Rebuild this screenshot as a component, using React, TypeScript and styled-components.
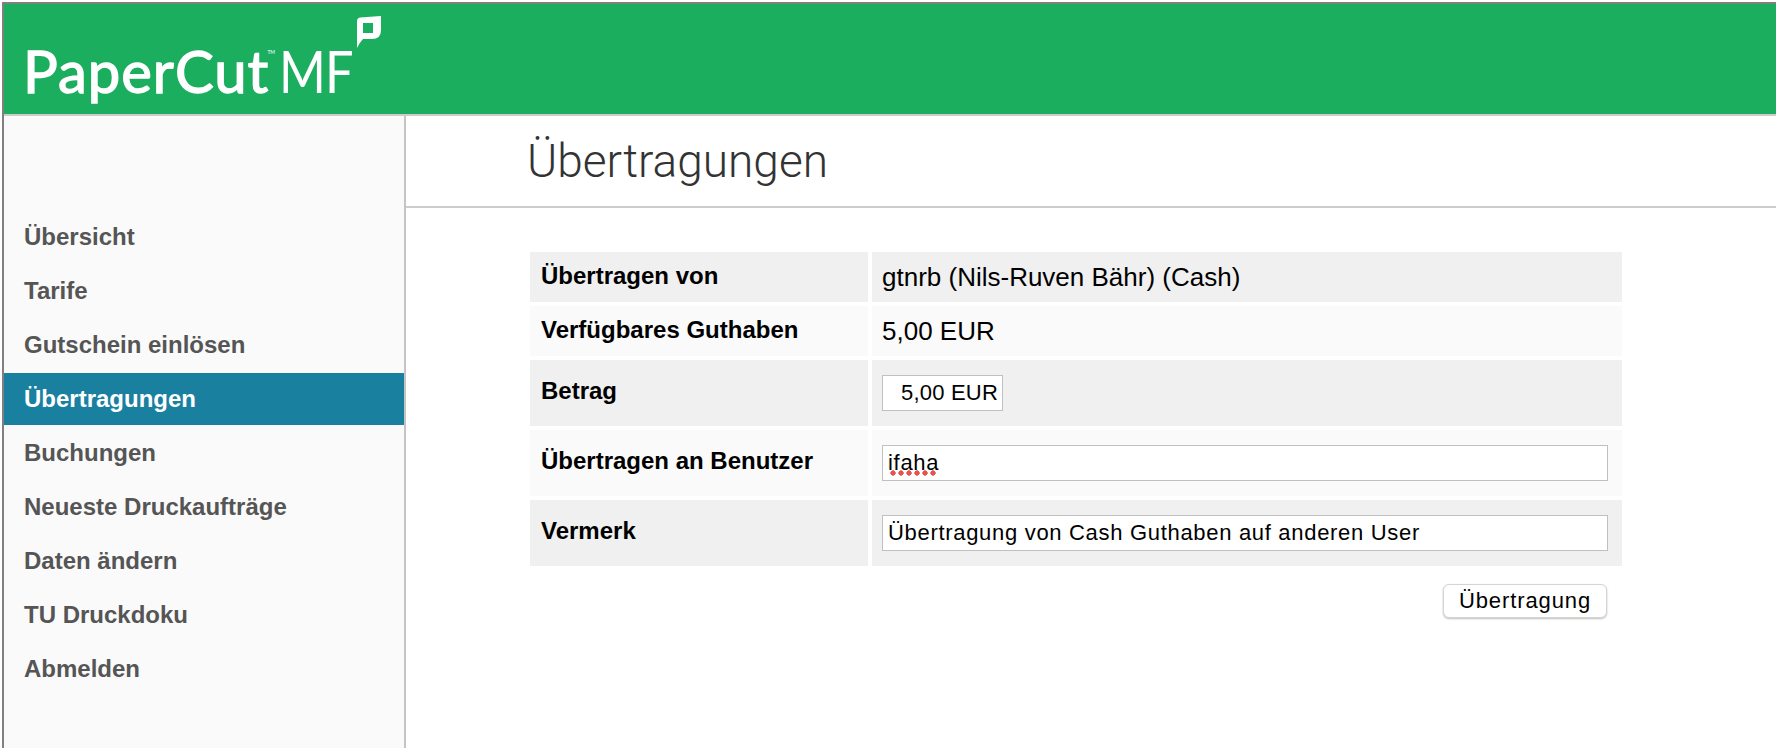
import { createGlobalStyle } from "styled-components";
import styled from "styled-components";

const GlobalStyle = createGlobalStyle`
  html, body {
    margin: 0;
    padding: 0;
    height: 100%;
    background: #ffffff;
    overflow: hidden;
  }
  #root {
    height: 100%;
  }
`;

const Frame = styled.div`
  box-sizing: border-box;
  height: 746px;
  margin: 2px 0 0 2px;
  border-top: 2px solid #808080;
  border-left: 2px solid #808080;
  display: flex;
  flex-direction: column;
  font-family: "Liberation Sans", Arial, sans-serif;
`;

const Header = styled.header`
  flex: none;
  box-sizing: border-box;
  height: 112px;
  background: #1cae5f;
  border-bottom: 2px solid #cccccc;
  padding: 32px 0 0 19px;
`;

const Logo = styled.div`
  position: relative;
  display: flex;
  align-items: baseline;
  color: #ffffff;
  font-family: Lato, "Open Sans", sans-serif;
  font-size: 58px;
  line-height: 70px;
  white-space: nowrap;
`;

const LogoStrong = styled.span`
  font-weight: 400;
  letter-spacing: 1px;
  -webkit-text-stroke: 1.3px #ffffff;
`;

const LogoTm = styled.span`
  font-size: 5px;
  line-height: 5px;
  align-self: flex-start;
  margin: 14px 0 0 -2px;
`;

const LogoLight = styled.span`
  font-weight: 400;
  margin-left: 4px;
  letter-spacing: -1px;
  transform: scaleX(0.87);
  transform-origin: left center;
`;

const LogoBubble = styled.svg`
  position: absolute;
  left: 334px;
  top: -20px;
`;

const Body = styled.div`
  flex: 1;
  display: flex;
  min-height: 0;
`;

const Sidebar = styled.nav`
  flex: none;
  box-sizing: border-box;
  width: 402px;
  background: #fafafa;
  border-right: 2px solid #c4c4c4;
  padding-top: 95px;
  display: flex;
  flex-direction: column;
  gap: 2px;
`;

const NavItem = styled.a<{ $active?: boolean }>`
  display: flex;
  align-items: center;
  height: 52px;
  padding-left: 20px;
  font-size: 24px;
  font-weight: 700;
  color: ${(p) => (p.$active ? "#ffffff" : "#555555")};
  background: ${(p) => (p.$active ? "#1a80a0" : "transparent")};
`;

const Main = styled.main`
  flex: 1;
  min-width: 0;
`;

const TitleBar = styled.div`
  box-sizing: border-box;
  height: 92px;
  border-bottom: 2px solid #cccccc;
  padding-left: 121px;
`;

const Title = styled.h1`
  margin: 0;
  font-family: Roboto, "Liberation Sans", sans-serif;
  font-weight: 300;
  font-size: 46px;
  line-height: 90px;
  color: #333333;
`;

const Content = styled.div`
  padding: 44px 154px 0 124px;
`;

const FormGrid = styled.div`
  display: grid;
  grid-template-columns: 338px 1fr;
  gap: 4px;
`;

const LabelCell = styled.div<{ $alt?: boolean; $tall?: boolean }>`
  box-sizing: border-box;
  height: ${(p) => (p.$tall ? 66 : 50)}px;
  padding: ${(p) => (p.$tall ? 18 : 11)}px 0 0 11px;
  background: ${(p) => (p.$alt ? "#fafafa" : "#f0f0f0")};
  font-size: 24px;
  line-height: 26px;
  font-weight: 700;
  color: #000000;
`;

const ValueCell = styled.div<{ $alt?: boolean; $tall?: boolean }>`
  position: relative;
  box-sizing: border-box;
  height: ${(p) => (p.$tall ? 66 : 50)}px;
  padding: ${(p) => (p.$tall ? "15px 14px 0 10px" : "11px 0 0 10px")};
  background: ${(p) => (p.$alt ? "#fafafa" : "#f0f0f0")};
  font-size: 26px;
  line-height: 28px;
  color: #000000;
`;

const TextInput = styled.input<{ $short?: boolean }>`
  display: block;
  box-sizing: border-box;
  width: ${(p) => (p.$short ? "121px" : "100%")};
  height: 36px;
  margin: 0;
  padding: ${(p) => (p.$short ? "0 4px 0 0" : "0 0 0 5px")};
  border: 1px solid #c0c0c0;
  border-radius: 0;
  outline: none;
  background: #ffffff;
  color: #000000;
  font-family: "Liberation Sans", Arial, sans-serif;
  font-size: 22px;
  letter-spacing: ${(p) => (p.$short ? "0.2px" : "0.69px")};
  text-align: ${(p) => (p.$short ? "right" : "left")};
`;

const SpellMark = styled.span`
  position: absolute;
  left: 17px;
  top: 40px;
  width: 47px;
  height: 6px;
  background-image: radial-gradient(circle at 4px 3px, #e8524a 2.4px, transparent 2.9px);
  background-size: 8px 6px;
  background-repeat: repeat-x;
`;

const Actions = styled.div`
  display: flex;
  justify-content: flex-end;
  padding: 18px 15px 0 0;
`;

const Button = styled.button`
  box-sizing: border-box;
  width: 164px;
  height: 34px;
  padding: 0;
  border: 1px solid #d4d4d4;
  border-radius: 6px;
  background: #ffffff;
  box-shadow: 0 1px 2px rgba(0, 0, 0, 0.25);
  color: #000000;
  font-family: "Liberation Sans", Arial, sans-serif;
  font-size: 22px;
  letter-spacing: 0.9px;
`;

const navItems = [
  "Übersicht",
  "Tarife",
  "Gutschein einlösen",
  "Übertragungen",
  "Buchungen",
  "Neueste Druckaufträge",
  "Daten ändern",
  "TU Druckdoku",
  "Abmelden",
];

export default function App() {
  return (
    <>
      <GlobalStyle />
      <Frame>
        <Header>
          <Logo>
            <LogoStrong>PaperCut</LogoStrong>
            <LogoTm>TM</LogoTm>
            <LogoLight>MF</LogoLight>
            <LogoBubble width="25" height="33" viewBox="0 0 25 33">
              <path
                fillRule="evenodd"
                fill="#ffffff"
                d="M0 5 Q0 2 3 1.5 L24 0 L24 14 Q24 23 15 23 L6 23 Q3 26 0 32 Z M6 7 L6 17 L16 17 L16 7 Z"
              />
            </LogoBubble>
          </Logo>
        </Header>
        <Body>
          <Sidebar>
            {navItems.map((item) => (
              <NavItem key={item} $active={item === "Übertragungen"}>
                {item}
              </NavItem>
            ))}
          </Sidebar>
          <Main>
            <TitleBar>
              <Title>Übertragungen</Title>
            </TitleBar>
            <Content>
              <FormGrid>
                <LabelCell>Übertragen von</LabelCell>
                <ValueCell>gtnrb (Nils-Ruven Bähr) (Cash)</ValueCell>

                <LabelCell $alt>Verfügbares Guthaben</LabelCell>
                <ValueCell $alt>5,00 EUR</ValueCell>

                <LabelCell $tall>Betrag</LabelCell>
                <ValueCell $tall>
                  <TextInput $short readOnly value="5,00 EUR" />
                </ValueCell>

                <LabelCell $alt $tall>Übertragen an Benutzer</LabelCell>
                <ValueCell $alt $tall>
                  <TextInput readOnly value="ifaha" />
                  <SpellMark />
                </ValueCell>

                <LabelCell $tall>Vermerk</LabelCell>
                <ValueCell $tall>
                  <TextInput readOnly value="Übertragung von Cash Guthaben auf anderen User" />
                </ValueCell>
              </FormGrid>
              <Actions>
                <Button>Übertragung</Button>
              </Actions>
            </Content>
          </Main>
        </Body>
      </Frame>
    </>
  );
}
